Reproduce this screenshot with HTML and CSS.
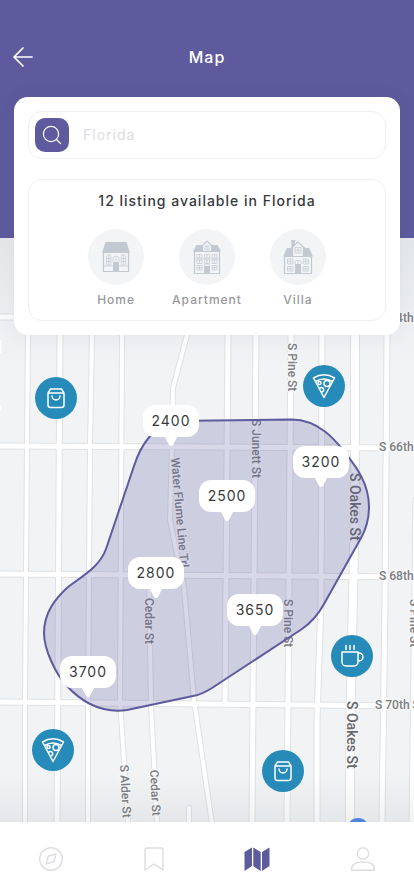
FILE: index.html
```
<!DOCTYPE html>
<html lang="en">
<head>
    <meta charset="UTF-8">
    <meta name="viewport" content="width=device-width, initial-scale=1.0">
    <title>Map</title>
    <link rel="stylesheet" href="styles.css">
</head>
<body>
    <header class="top">
        <div class="title-bar">
            <a href="#" class="back" aria-label="Back">
                <svg width="22" height="22" viewBox="0 0 22 22"><path d="M20 11H2M11 2L2 11l9 9"/></svg>
            </a>
            <h1>Map</h1>
        </div>
        <div class="card">
            <form class="search">
                <button type="submit" aria-label="Search">
                    <svg width="20" height="20" viewBox="0 0 20 20"><circle cx="9" cy="9" r="7.600"/><path d="M14.500 14.500l4 4"/></svg>
                </button>
                <input type="text" placeholder="Florida" aria-label="Location">
            </form>
            <section class="listing">
                <h2>12 listing available in Florida</h2>
                <div class="types">
                    <button type="button">
                        <span class="thumb">
                            <svg width="28" height="34" viewBox="0 0 28 34">
                                <path class="fill" d="M3.500 2h21L28 13H0z"/>
                                <path class="wall" d="M1.500 13v18.500h25V13"/>
                                <path class="fill" d="M11 22h6v10h-6z"/>
                                <path class="line" d="M11 22v-3a3 3 0 0 1 6 0v3M14 17v5M4.500 25v-8a2.200 2.200 0 0 1 4.400 0v8zM19.200 25v-8a2.200 2.200 0 0 1 4.400 0v8zM6.700 15v10M21.400 15v10M4.500 18.500h4.400M4.500 21.500h4.400M19.200 18.500h4.400M19.200 21.500h4.400M1.500 26H11M17 26h9.500"/>
                            </svg>
                        </span>
                        <span class="name">Home</span>
                    </button>
                    <button type="button">
                        <span class="thumb">
                            <svg width="28" height="34" viewBox="0 0 28 34">
                                <path class="fill" d="M3.500 5h6v6.500H0zM18.500 5h6L28 11.500h-9.500z"/>
                                <path class="wall" d="M1.500 11.500v22h25v-22zM8.500 6.500L14 1l5.500 5.500M9.500 6v5.500h9V6"/>
                                <path class="fill" d="M11 26h6v8h-6z"/>
                                <path class="line" d="M12 6h4v4h-4zM14 6v4M4 14.500h5v3.500H4zM6.500 14.500V18M11.500 14.500h5v3.500h-5zM14 14.500V18M19 14.500h5v3.500h-5zM21.500 14.500V18M4 20h5v3.500H4zM6.500 20v3.500M11.500 20h5v3.500h-5zM14 20v3.500M19 20h5v3.500h-5zM21.500 20v3.500M4 25.500h5V30H4zM6.500 25.500V30M19 25.500h5V30h-5zM21.500 25.500V30M4 27.700h5M19 27.700h5M1.500 18.900h25M11 26a3 2 0 0 1 6 0"/>
                            </svg>
                        </span>
                        <span class="name">Apartment</span>
                    </button>
                    <button type="button">
                        <span class="thumb">
                            <svg width="30" height="34" viewBox="0 0 30 34">
                                <path class="fill" d="M4 8h5v8.500H0zM20 8h6l4 8.500H20zM8.500 1H12v4l-3.500 3zM8 0h4.500v1.500H8z"/>
                                <path class="wall" d="M1.500 16.500v17h27v-17zM8 8.500L15 2l7 6.500M9.500 7.500v9h11v-9"/>
                                <path class="fill" d="M12 24h6v10h-6z"/>
                                <path class="line" d="M12 7.500h6V13h-6zM15 7.500V13M12 10.200h6M4.500 19h5.500v5H4.500zM7.200 19v5M4.500 21.500H10M20 19h5.500v5H20zM22.700 19v5M20 21.500h5.500M4.500 26.500h5.500v4.500H4.500zM7.200 26.500V31M4.500 28.700H10M20 26.500h5.500v4.500H20zM22.700 26.500V31M20 28.700h5.500M12 24v-1.500a3 2.500 0 0 1 6 0V24M15 20v4"/>
                            </svg>
                        </span>
                        <span class="name">Villa</span>
                    </button>
                </div>
            </section>
        </div>
    </header>

    <main class="map">
        <svg class="canvas" viewBox="0 238 414 584" preserveAspectRatio="xMidYMid slice">
            <defs>
                <linearGradient id="shade-top" x1="0" y1="0" x2="0" y2="1">
                    <stop offset="0" stop-color="#8a8f98" stop-opacity=".12"/>
                    <stop offset="1" stop-color="#8a8f98" stop-opacity="0"/>
                </linearGradient>
                <linearGradient id="shade-bottom" x1="0" y1="0" x2="0" y2="1">
                    <stop offset="0" stop-color="#777b80" stop-opacity="0"/>
                    <stop offset="1" stop-color="#777b80" stop-opacity=".1"/>
                </linearGradient>
                <g id="roads">
                    <path class="r4" d="M28 238v97L27 446L25 705V822M92 238v97L90 446L88 705V822M122 238v97L120 700L128 822"/>
                    <path class="r4" d="M199 280L187 335L173 388L172 446L170 520L184 588L194 700L212 824M149 575L151 705L157 822M189 808V824"/>
                    <path class="r5" d="M60 238v97L57 822M228 238v97L225 704M256 238v97L252 822M291 238v97L287 822M322 238v97L321 600L317 720V822M387 238v97L385 600L382 822M416 500L412 822"/>
                    <path class="r5" d="M0 317H414M0 446L414 448M0 574L414 577M0 702L414 706"/>
                    <path class="r8" d="M355 238V500L350 740V822"/>
                </g>
                <g id="bag">
                    <path d="M-8 -5v12a2.500 2.500 0 0 0 2.500 2.500h11A2.500 2.500 0 0 0 8 7v-12zM-8 -5l2.500-4h11L8 -5M-4 -2a4 4 0 0 0 8 0"/>
                </g>
                <g id="pizza">
                    <path d="M-10.500 -8Q0 -14.500 10.500 -8L0 11.500zM-8.500 -4.500Q0 -9.500 8.500 -4.500"/>
                    <circle cx="3" cy="-2.500" r="3"/>
                    <circle cx="-4.500" cy="-3" r="1.600"/>
                    <path d="M-4.500 2.500a2.300 2.300 0 1 1 2.300 3.500"/>
                </g>
                <g id="coffee">
                    <path d="M-10 -4H6V6a4 4 0 0 1-4 4h-8a4 4 0 0 1-4-4zM6 -3h1a3.800 3.800 0 0 1 0 8H6M-6 -10.500v4M-2 -10.500v4M2 -10.500v4"/>
                </g>
                <path id="bubble" d="M-16 -41H16A12 12 0 0 1 28 -29V-21A12 12 0 0 1 16 -9H6L2 -1Q0 1 -2 -1L-6 -9H-16A12 12 0 0 1 -28 -21V-29A12 12 0 0 1 -16 -41z"/>
            </defs>

            <rect class="land" x="0" y="238" width="414" height="584"/>
            <use href="#roads" class="casing"/>
            <use href="#roads" class="surface"/>
            <path class="surface-dot" d="M0 340v13M0 405v6"/>

            <g class="streets">
                <text x="379" y="322">S 64th St</text>
                <text x="379" y="451">S 66th St</text>
                <text x="379" y="580">S 68th St</text>
                <text x="375" y="709">S 70th St</text>
                <text transform="translate(288 343) rotate(90)">S Pine St</text>
                <text transform="translate(252 419) rotate(90)">S Junett St</text>
                <text transform="translate(171 458) rotate(85)">Water Flume Line Trl</text>
                <text transform="translate(145 598) rotate(90)">Cedar St</text>
                <text transform="translate(284 599) rotate(90)">S Pine St</text>
                <text transform="translate(410 599) rotate(90)">S Pine St</text>
                <text transform="translate(120 765) rotate(87)">S Alder St</text>
                <text transform="translate(150 770) rotate(87)">Cedar St</text>
                <text class="main-street" transform="translate(350 473) rotate(90)">S Oakes St</text>
                <text class="main-street" transform="translate(347 701) rotate(90)">S Oakes St</text>
            </g>

            <circle class="me" cx="358" cy="829" r="11"/>
            <rect x="0" y="238" width="414" height="130" fill="url(#shade-top)"/>
            <rect x="0" y="772" width="414" height="50" fill="url(#shade-bottom)"/>

            <path class="area" d="M171 421L292 419.500C319 420 335 440 343 450C352 462 369 480 369 507C369 520 365 531 361 538L324 604C318 615 312 622 302 629L212 688C204 693 200 695 193 696L127 710C105 713 85 706 66 685C56 674 44 650 44 633C44 612 56 598 68 587C84 575 100 566 106 549L134 466C140 447 150 430 171 421z"/>

            <a href="#" class="place" transform="translate(56 398)" aria-label="Shop"><circle r="21"/><use href="#bag"/></a>
            <a href="#" class="place" transform="translate(324 386)" aria-label="Pizza"><circle r="21"/><use href="#pizza"/></a>
            <a href="#" class="place" transform="translate(352 656)" aria-label="Cafe"><circle r="21"/><use href="#coffee"/></a>
            <a href="#" class="place" transform="translate(53 750)" aria-label="Pizza"><circle r="21"/><use href="#pizza"/></a>
            <a href="#" class="place" transform="translate(283 771)" aria-label="Shop"><circle r="21"/><use href="#bag"/></a>

            <a href="#" class="price" transform="translate(171 446)"><use href="#bubble"/><text y="-20">2400</text></a>
            <a href="#" class="price" transform="translate(321 487)"><use href="#bubble"/><text y="-20">3200</text></a>
            <a href="#" class="price" transform="translate(227 521)"><use href="#bubble"/><text y="-20">2500</text></a>
            <a href="#" class="price" transform="translate(156 598)"><use href="#bubble"/><text y="-20">2800</text></a>
            <a href="#" class="price" transform="translate(255 635)"><use href="#bubble"/><text y="-20">3650</text></a>
            <a href="#" class="price" transform="translate(88 697)"><use href="#bubble"/><text y="-20">3700</text></a>
        </svg>
    </main>

    <nav class="tabs">
        <a href="#" aria-label="Explore">
            <svg width="24" height="24" viewBox="0 0 24 24"><circle cx="12" cy="12" r="11.300"/><path d="M17 7l-2 7.500L7 17l2.500-8z"/></svg>
        </a>
        <a href="#" aria-label="Saved">
            <svg width="20" height="24" viewBox="0 0 20 24"><path d="M1 23V3a2 2 0 0 1 2-2h14a2 2 0 0 1 2 2v20l-9-6z"/></svg>
        </a>
        <a href="#" class="on" aria-label="Map">
            <svg width="26" height="24" viewBox="0 0 26 24"><path d="M.500 5L8 .500v18.500L.500 24zM9.300 .500l7.400 4.500v19l-7.400-4.700zM18 5l7.500-4.500V19L18 24z"/></svg>
        </a>
        <a href="#" aria-label="Profile">
            <svg width="24" height="24" viewBox="0 0 24 24"><circle cx="12" cy="6.500" r="5.700"/><path d="M.700 23.300v-2C.700 17.500 5 15 12 15s11.300 2.500 11.300 6.300v2z"/></svg>
        </a>
    </nav>
</body>
</html>
```
FILE: styles.css
```
* { margin:0; padding:0; box-sizing:border-box;}
body { display:flex; flex-direction:column; min-height:100vh; font-family:Inter, "Liberation Sans", sans-serif; color:#38393c; background-color:#fff;}
button { border:0; background:none; font:inherit; color:inherit; cursor:pointer;}
svg { display:block;}

.top { position:relative; z-index:1; padding-top:45px; background-color:#5d5a9d;}
.title-bar { display:grid; grid-template-columns:22px 1fr 22px; align-items:center; padding:0 12px; height:24px;}
.title-bar h1 { font-size:16px; line-height:24px; font-weight:500; letter-spacing:1px; text-align:center; color:#fff;}
.back svg { fill:none; stroke:#fff; stroke-width:1.7; stroke-linecap:round; stroke-linejoin:round;}

/* hangs over the top of the map */
.card { margin:28px 14px -97px; padding:14px; border-radius:14px; background-color:#fff; box-shadow:0 0 20px rgba(60,60,100,0.06);}

.search { display:flex; align-items:center; gap:14px; height:48px; padding:0 6px; border:1px solid #efeff1; border-radius:14px;}
.search button { display:flex; justify-content:center; align-items:center; width:34px; height:34px; border-radius:10px; background-color:#5d5a9d;}
.search svg { fill:none; stroke:#fff; stroke-width:1.2; stroke-linecap:round;}
.search input { flex:1; min-width:0; border:0; outline:0; background:none; font:14px/20px Inter, "Liberation Sans", sans-serif; letter-spacing:1px; color:#38393c;}
.search input::placeholder { color:#dcdde1; opacity:1;}

.listing { margin-top:20px; padding:11px 14px; border:1px solid #efeff1; border-radius:14px;}
.listing h2 { font-size:14px; line-height:20px; font-weight:500; letter-spacing:1px; text-align:center;}
.types { display:flex; justify-content:center; gap:28px; margin-top:18px;}
.types button { display:flex; flex-direction:column; align-items:center; gap:6px;}
.thumb { display:flex; justify-content:center; align-items:center; width:56px; height:56px; border-radius:50%; background-color:#f2f4f6;}
.thumb .fill { fill:#c3c9d1;}
.thumb .wall { fill:none; stroke:#c3c9d1; stroke-width:1.2;}
.thumb .line { fill:none; stroke:#c3c9d1; stroke-width:0.7;}
.name { font-size:12px; line-height:18px; font-weight:500; letter-spacing:1px; color:#97989c;}

.map { position:relative; flex:1; min-height:584px; overflow:hidden;}
.canvas { position:absolute; left:0; top:0; width:100%; height:100%;}
.land { fill:#f1f3f5;}
.casing, .surface { fill:none; stroke-linejoin:round; stroke-linecap:round;}
.casing { stroke:#e0e1e3; --edge:2px;}
.surface { stroke:#fff; --edge:0px;}
.surface-dot { stroke:#fff; stroke-width:3;}
.r4 { stroke-width:calc(4px + var(--edge));}
.r5 { stroke-width:calc(5px + var(--edge));}
.r8 { stroke-width:calc(8px + var(--edge));}

.streets { font-family:Roboto, "Liberation Sans", sans-serif; font-size:12px; font-weight:500; fill:#7b7d81; stroke:#f7f8f9; stroke-width:3; stroke-linejoin:round; paint-order:stroke;}
.streets .main-street { font-size:14px; fill:#66686c;}
.me { fill:#4a86e8;}
.area { fill:#5d5a9d; fill-opacity:0.24; stroke:#5d5a9d; stroke-width:2;}
.place { fill:none; stroke:#fff; stroke-width:1.5; stroke-linecap:round; stroke-linejoin:round;}
.place > circle { fill:#278bba; stroke:none;}
.price { fill:#fff;}
.price text { font-size:14px; letter-spacing:1px; text-anchor:middle; fill:#38393c;}

.tabs { display:flex; justify-content:space-between; align-items:center; height:74px; padding:0 39px; background-color:#fff;}
.tabs svg { fill:none; stroke:#dcdde2; stroke-width:1.4; stroke-linejoin:round;}
.tabs .on svg { fill:#5d5a9d; stroke:none;}
```
